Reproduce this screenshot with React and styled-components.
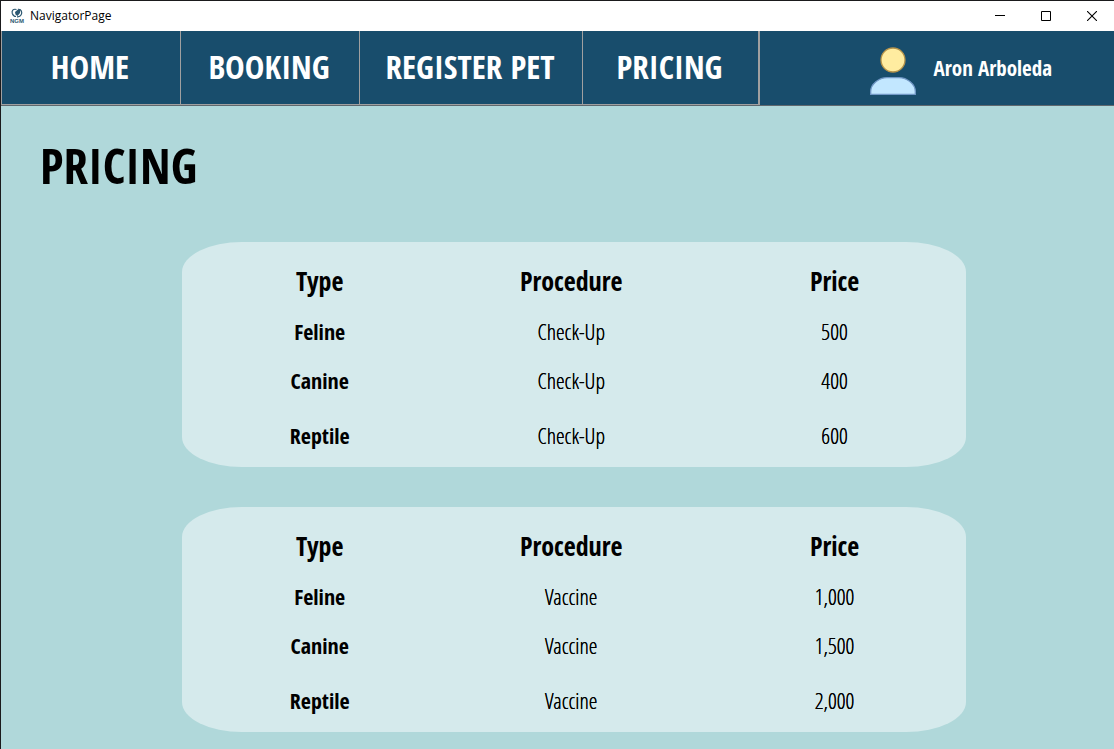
import React from 'react';
import styled, { createGlobalStyle } from 'styled-components';

const GlobalStyle = createGlobalStyle`
  *, *::before, *::after { box-sizing: border-box; }
  body { margin: 0; background: #b0d8da; }
`;

const display = '"Open Sans Condensed", "Roboto Condensed", sans-serif';
const light = '"Open Sans Condensed Light", "Roboto Condensed", sans-serif';

const Window = styled.div`
  min-height: 100vh;
  display: flex;
  flex-direction: column;
  border-top: 1px solid #1a1a1c;
  border-left: 1px solid #1a1a1c;
  background: #b0d8da;
  color: #000;
  font-family: ${display};
`;

const TitleBar = styled.header`
  display: flex;
  align-items: center;
  height: 30px;
  padding-left: 8px;
  background: #fff;
`;

const WindowTitle = styled.span`
  flex: 1;
  margin-left: 5px;
  font: 12px/16px "Open Sans", "Noto Sans", sans-serif;
`;

const WindowButton = styled.button`
  display: flex;
  align-items: center;
  justify-content: center;
  width: 46px;
  height: 30px;
  padding: 0 0 0 2px;
  border: 0;
  background: none;
  color: #000;
`;

const NavBar = styled.div`
  display: flex;
  justify-content: space-between;
  height: 75px;
  background: #184d6c;
  border-bottom: 1px solid #5f686e;
`;

const Nav = styled.nav`
  display: flex;
  border: 0 solid #a0a0a0;
  border-width: 0 1px;
`;

const NavButton = styled.button`
  min-width: ${(p) => p.$width}px;
  padding: 0 2px 2px 0;
  border: 0 solid #a0a0a0;
  border-right-width: 1px;
  border-bottom-width: 1px;
  background: none;
  color: #fff;
  font: bold 33px/40px ${display};
`;

const Profile = styled.button`
  display: flex;
  align-items: center;
  gap: 18px;
  padding: 0 62px 0 0;
  border: 0;
  background: none;
  color: #fff;
  font: bold 21px/26px ${display};
`;

const AvatarIcon = styled.svg`
  display: block;
  margin-top: 6px;
`;

const Main = styled.main`
  flex: 1;
  padding: 31px 148px 17px 181px;
`;

const Heading = styled.h1`
  margin: 0 0 49px -142px;
  font: bold 49px/56px ${display};
`;

const Cards = styled.div`
  display: grid;
  gap: 40px;
`;

const Card = styled.section`
  padding: 12px 0 1px 10px;
  border-radius: 60px / 30px;
  background: #d5eaec;
`;

const PriceTable = styled.table`
  width: 100%;
  table-layout: fixed;
  border-collapse: collapse;
  text-align: center;
`;

const Row = styled.tr`
  height: ${(p) => p.$height}px;

  & > :last-child { padding-left: 8px; }
`;

const ColumnHead = styled.th`
  width: ${(p) => p.$width};
  padding: 0;
  font: bold 26px/32px ${display};
`;

const TypeCell = styled.th`
  padding: 0 0 2px;
  font: bold 22px/28px ${display};
`;

const Cell = styled.td`
  padding: 0 0 2px;
  font: 300 22px/28px ${light};
  text-shadow: 0 0 0 #000;
`;

const rowHeights = [48, 50, 60];
const types = ['Feline', 'Canine', 'Reptile'];
const priceLists = [
  { procedure: 'Check-Up', prices: ['500', '400', '600'] },
  { procedure: 'Vaccine', prices: ['1,000', '1,500', '2,000'] },
];

function AppLogo() {
  return (
    <svg width="16" height="16" viewBox="0 0 16 16" aria-hidden="true">
      <path d="M7.500 1.500C4 .5 2.500 3 3.300 5.500 4 7.500 5.500 8.500 7 8.500M8 8.800c3 .2 5-2 4.700-4.600C12.400 2 10.500 1 9 1.300" fill="none" stroke="#2c5771" strokeWidth="1.2" />
      <path d="M6 4l3-2.500h2.500L11 5 8.500 8 6.500 6.500z" fill="#2c5771" />
      <text x="8" y="14.500" textAnchor="middle" fontFamily="Liberation Sans" fontWeight="bold" fontSize="6" fill="#2c5771">NGM</text>
    </svg>
  );
}

function Avatar() {
  return (
    <AvatarIcon width="46" height="50" viewBox="0 0 46 50" aria-hidden="true">
      <circle cx="23" cy="14" r="12" fill="#ffeca0" stroke="#b5934a" strokeWidth="1.3" />
      <path d="M.7 48.300V45.500C.7 38 9 31.700 17 31.700h12c8 0 16.300 6.300 16.300 13.800v2.800z" fill="#c2e7ff" stroke="#7298c6" strokeWidth="1.3" />
    </AvatarIcon>
  );
}

function PriceCard({ procedure, prices }) {
  return (
    <Card>
      <PriceTable aria-label={`${procedure} prices`}>
        <thead>
          <Row $height={54}>
            <ColumnHead scope="col" $width="33%">Type</ColumnHead>
            <ColumnHead scope="col" $width="32%">Procedure</ColumnHead>
            <ColumnHead scope="col" $width="35%">Price</ColumnHead>
          </Row>
        </thead>
        <tbody>
          {types.map((type, i) => (
            <Row key={type} $height={rowHeights[i]}>
              <TypeCell scope="row">{type}</TypeCell>
              <Cell>{procedure}</Cell>
              <Cell>{prices[i]}</Cell>
            </Row>
          ))}
        </tbody>
      </PriceTable>
    </Card>
  );
}

export default function App() {
  return (
    <>
      <GlobalStyle />
      <Window>
        <TitleBar>
          <AppLogo />
          <WindowTitle>NavigatorPage</WindowTitle>
          <WindowButton aria-label="Minimize">
            <svg width="10" height="10"><path d="M0 4.500h10" stroke="currentColor" /></svg>
          </WindowButton>
          <WindowButton aria-label="Maximize">
            <svg width="10" height="10"><path d="M.5.5h9v9h-9z" fill="none" stroke="currentColor" /></svg>
          </WindowButton>
          <WindowButton aria-label="Close">
            <svg width="10" height="10"><path d="M0 0l10 10M10 0L0 10" stroke="currentColor" strokeWidth="1.1" /></svg>
          </WindowButton>
        </TitleBar>
        <NavBar>
          <Nav>
            <NavButton $width={179}>HOME</NavButton>
            <NavButton $width={179}>BOOKING</NavButton>
            <NavButton $width={223}>REGISTER PET</NavButton>
            <NavButton $width={176}>PRICING</NavButton>
          </Nav>
          <Profile>
            <Avatar />
            Aron Arboleda
          </Profile>
        </NavBar>
        <Main>
          <Heading>PRICING</Heading>
          <Cards>
            {priceLists.map((list) => (
              <PriceCard key={list.procedure} {...list} />
            ))}
          </Cards>
        </Main>
      </Window>
    </>
  );
}
